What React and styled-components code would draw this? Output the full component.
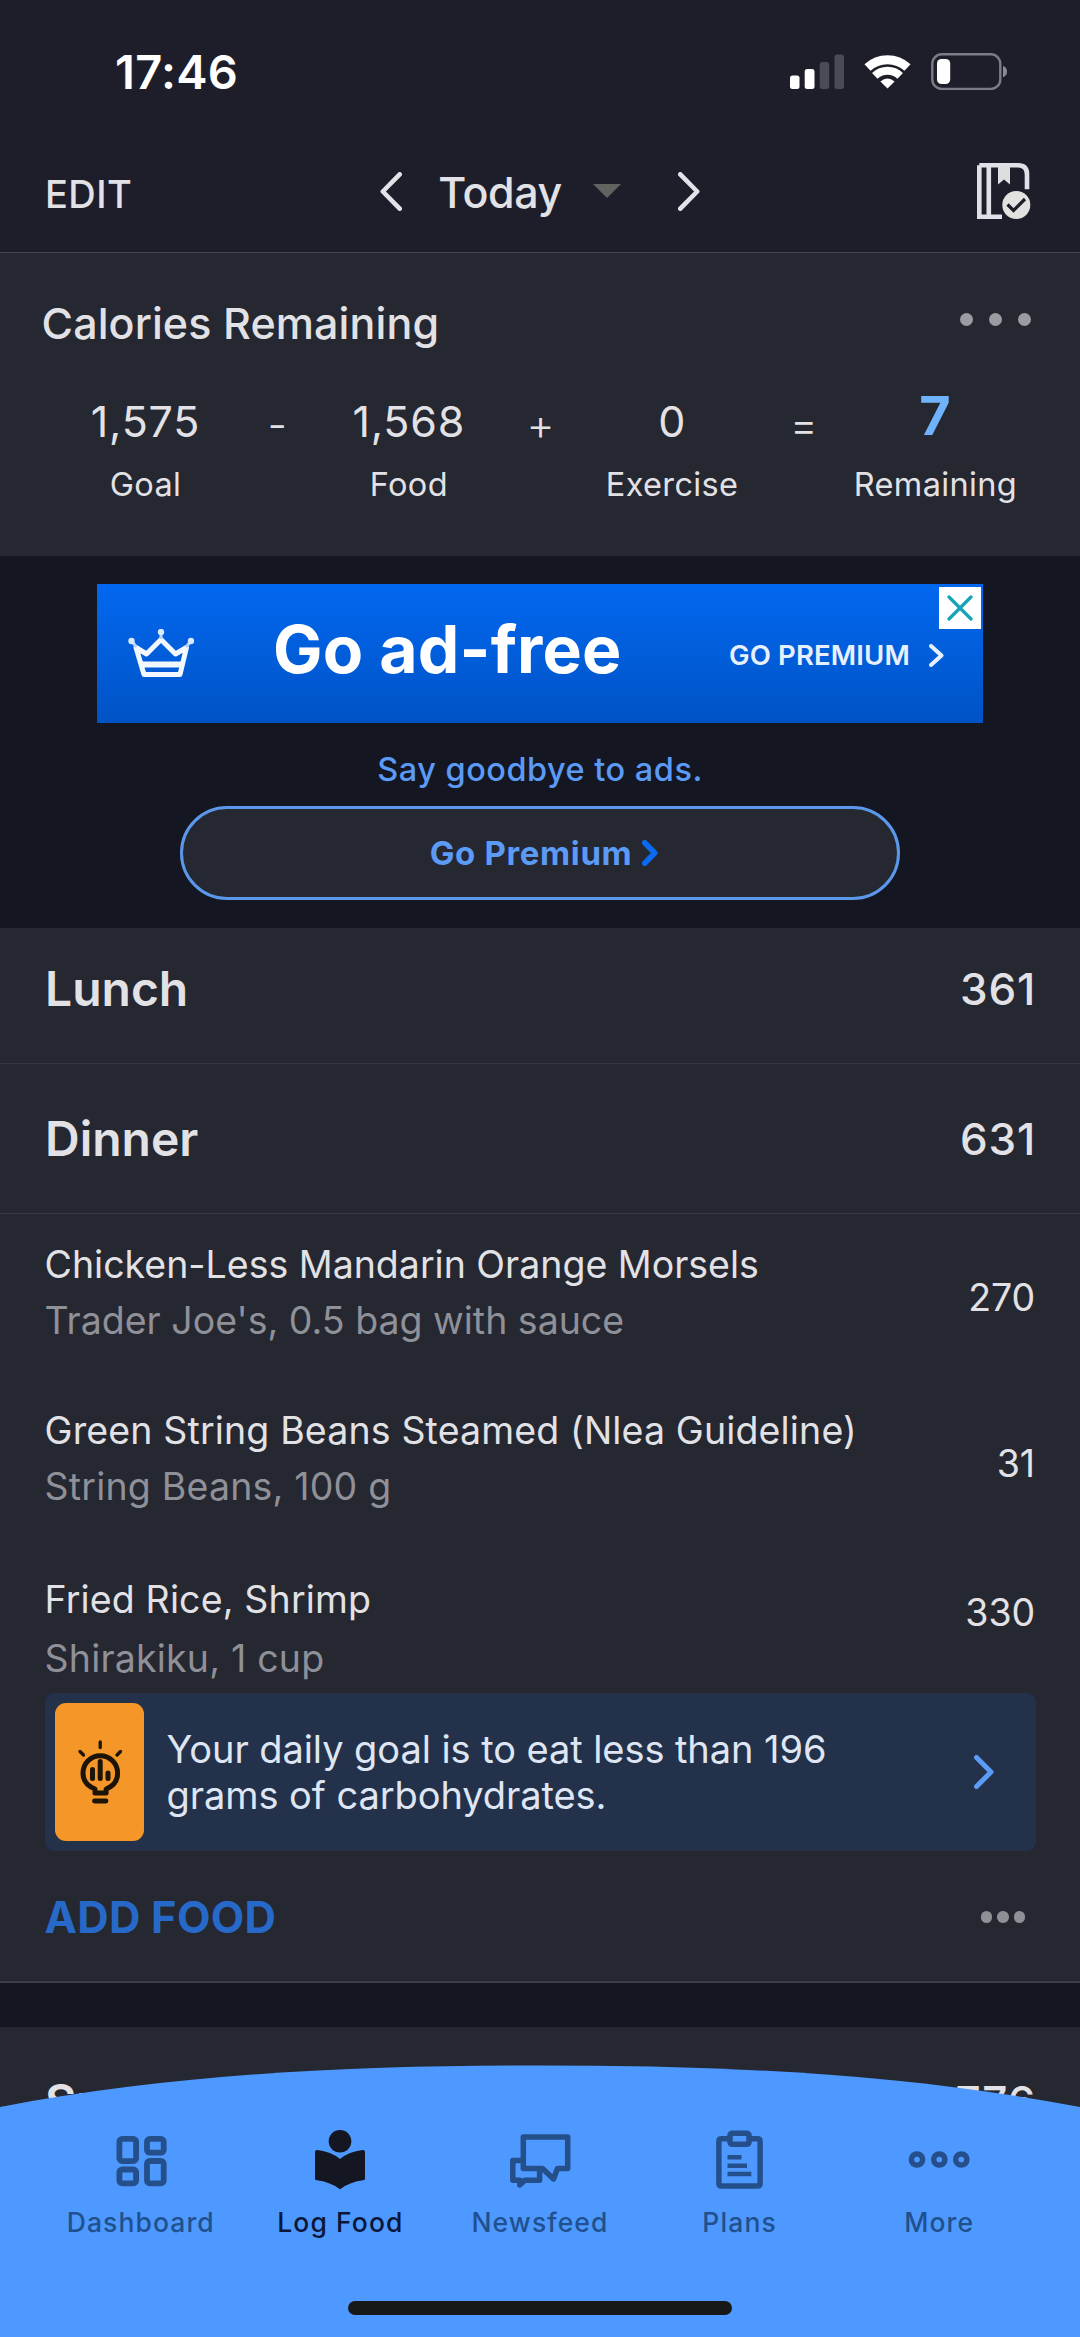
import styled, { createGlobalStyle, css } from "styled-components";

const GlobalStyle = createGlobalStyle`
  * {
    box-sizing: border-box;
  }
  body {
    margin: 0;
    background: #141622;
    color: #e2e2e6;
    font-family: "Inter", "Liberation Sans", sans-serif;
  }
  svg {
    display: block;
    flex: none;
  }
`;

const Screen = styled.div`
  position: relative;
  width: 1080px;
  height: 2337px;
  overflow: hidden;
`;

/* Status bar */
const StatusBar = styled.div`
  display: flex;
  align-items: center;
  justify-content: space-between;
  height: 144px;
  padding: 0 73px 0 115px;
  background: #1d1e29;
`;

const Clock = styled.div`
  padding-bottom: 1px;
  font-size: 47px;
  font-weight: 600;
  letter-spacing: 0.3px;
  color: #fff;
`;

const StatusIcons = styled.div`
  display: flex;
  align-items: center;
`;

/* Day picker header */
const Header = styled.header`
  display: grid;
  grid-template-columns: 1fr auto 1fr;
  align-items: center;
  height: 109px;
  padding: 0 49px 14px 45px;
  background: #1d1e29;
  border-bottom: 1px solid #42444d;
`;

const Edit = styled.div`
  padding-top: 6px;
  font-size: 38px;
  font-weight: 550;
  letter-spacing: 0.4px;
`;

const DayPicker = styled.div`
  display: flex;
  align-items: center;
  margin-left: 4px;
`;

const Day = styled.div`
  margin: 0 31px 0 36px;
  padding-top: 2px;
  font-size: 43px;
  font-weight: 450;
  letter-spacing: -0.4px;
`;

const HeaderAction = styled.div`
  justify-self: end;
`;

/* Calories summary */
const Summary = styled.section`
  height: 303px;
  background: #252731;
`;

const SummaryHead = styled.div`
  display: flex;
  align-items: center;
  justify-content: space-between;
  height: 140px;
  padding: 0 49px 0 41.5px;
`;

const SummaryTitle = styled.h2`
  margin: 0;
  font-size: 43px;
  font-weight: 450;
  letter-spacing: 0.1px;
`;

const Dots = styled.div`
  display: flex;
  gap: ${(p) => p.$gap}px;
  padding-bottom: ${(p) => p.$lift || 0}px;
  i {
    width: ${(p) => p.$size}px;
    height: ${(p) => p.$size}px;
    border-radius: 50%;
    background: ${(p) => p.$color};
  }
`;

const Equation = styled.div`
  display: grid;
  grid-template-columns: 180px 83.3px 180px 83.3px 180px 83.3px 180px;
  padding-left: 55.5px;
  text-align: center;
`;

const Operator = styled.div`
  line-height: 62px;
  font-size: 43px;
  font-weight: 350;
`;

const Value = styled.div`
  height: 58px;
  line-height: 57px;
  font-size: 43px;
  letter-spacing: 0.8px;
  ${(p) =>
    p.$highlight &&
    css`
      line-height: 45px;
      font-size: 54px;
      font-weight: 700;
      color: #70b3fd;
    `}
`;

const Caption = styled.div`
  line-height: 68px;
  font-size: 32.5px;
  letter-spacing: 0.35px;
`;

/* Ads */
const AdArea = styled.section`
  display: flex;
  flex-direction: column;
  align-items: center;
  height: 372px;
  padding-top: 28px;
  background: #141622;
`;

const Banner = styled.div`
  position: relative;
  display: flex;
  align-items: center;
  width: 886px;
  height: 139px;
  padding: 0 39px 0 31px;
  background: linear-gradient(#0268f0, #0053c5);
  color: #fff;
`;

const BannerTitle = styled.div`
  margin-left: 79px;
  padding-bottom: 10px;
  font-size: 66px;
  font-weight: 700;
  letter-spacing: 0.2px;
`;

const BannerLink = styled.div`
  display: flex;
  align-items: center;
  gap: 19px;
  margin-left: auto;
  padding-top: 3px;
  font-size: 27.5px;
  font-weight: 600;
  letter-spacing: 0.15px;
  color: #e6f0ff;
`;

const CloseBox = styled.div`
  position: absolute;
  top: 3px;
  right: 2px;
  display: flex;
  align-items: center;
  justify-content: center;
  width: 42px;
  height: 42px;
  background: #fff;
`;

const AdNote = styled.div`
  height: 83px;
  padding-top: 11px;
  line-height: 72px;
  font-size: 32.5px;
  font-weight: 450;
  letter-spacing: 0.5px;
  color: #5b9bf6;
`;

const PremiumButton = styled.button`
  display: flex;
  align-items: center;
  justify-content: center;
  gap: 10px;
  width: 720px;
  height: 94px;
  padding: 0 0 1px 8px;
  border: 3px solid #5b97ea;
  border-radius: 47px;
  background: #252731;
  font-family: inherit;
  font-size: 33px;
  font-weight: 700;
  letter-spacing: 0.65px;
  color: #5b9bf6;
`;

/* Diary */
const MealRow = styled.div`
  display: flex;
  align-items: center;
  justify-content: space-between;
  height: ${(p) => p.$height}px;
  padding: 0 45px;
  padding-bottom: ${(p) => p.$lift || 0}px;
  border-bottom: 1px solid #363843;
  background: #252731;
`;

const MealName = styled.h3`
  margin: 0;
  font-size: 48px;
  font-weight: 600;
`;

const MealTotal = styled.div`
  margin-right: -1px;
  font-size: 44px;
  font-weight: 500;
  letter-spacing: 0.8px;
`;

const Food = styled.div`
  display: flex;
  align-items: center;
  justify-content: space-between;
  height: ${(p) => (p.$last ? 147 : 166)}px;
  padding: 0 45px 0 44.5px;
  background: #252731;
`;

const FoodText = styled.div`
  align-self: flex-start;
  padding-top: ${(p) => (p.$last ? 25 : 23)}px;
  font-size: 37.5px;
  line-height: ${(p) => (p.$last ? 58.5 : 56)}px;
`;

const FoodName = styled.div`
  letter-spacing: ${(p) => p.$tracking}px;
`;

const FoodDetail = styled.div`
  letter-spacing: ${(p) => p.$tracking}px;
  color: #8f9098;
`;

const FoodCalories = styled.div`
  padding-bottom: ${(p) => (p.$last ? 14 : 0)}px;
  font-size: 37.5px;
  letter-spacing: -0.1px;
`;

const TipWrap = styled.div`
  padding: 0 44.5px;
  background: #252731;
`;

const Tip = styled.div`
  display: flex;
  align-items: center;
  height: 158px;
  padding: 0 42px 0 10.5px;
  border-radius: 9px;
  background: #24314a;
`;

const TipBadge = styled.div`
  display: flex;
  align-items: center;
  justify-content: center;
  width: 89px;
  height: 138px;
  border-radius: 11px;
  background: #f59628;
`;

const TipText = styled.p`
  flex: 1;
  margin: 0 0 0 22.5px;
  font-size: 38px;
  line-height: 46px;
  letter-spacing: -0.07px;
  white-space: nowrap;
  color: #dfe6f3;
`;

const AddRow = styled.div`
  display: flex;
  align-items: center;
  justify-content: space-between;
  height: 132px;
  padding: 2px 55px 0 44.5px;
  border-bottom: 2px solid #3b3d47;
  background: #252731;
`;

const AddFood = styled.div`
  font-size: 43.5px;
  font-weight: 700;
  letter-spacing: 0.25px;
  color: #2769c8;
`;

const Gap = styled.div`
  height: 44px;
`;

/* Tab bar, lies over the diary */
const TabBar = styled.nav`
  position: absolute;
  left: 0;
  bottom: 0;
  z-index: 1;
  width: 1080px;
  height: 272px;
  padding: 65px 41px 0;
`;

const Curve = styled.svg`
  position: absolute;
  left: 0;
  top: 0;
  z-index: -1;
`;

const Tabs = styled.div`
  display: grid;
  grid-template-columns: repeat(5, 1fr);
  justify-items: center;
`;

const Tab = styled.div`
  display: flex;
  flex-direction: column;
  align-items: center;
  color: ${(p) => (p.$active ? "#141622" : "#254f8b")};
`;

const TabLabel = styled.div`
  line-height: 64px;
  font-size: 26.5px;
  font-weight: ${(p) => (p.$active ? 500 : 450)};
  letter-spacing: 1.1px;
  color: ${(p) => (p.$active ? "#0b1638" : "#21508f")};
`;

const HomeIndicator = styled.div`
  width: 384px;
  height: 14px;
  margin: 47px auto 0;
  border-radius: 7px;
  background: #171918;
`;

const Chevron = ({ w, h, stroke, color, left }) => (
  <svg width={w} height={h} fill="none" stroke={color} strokeWidth={stroke} strokeLinecap="round" strokeLinejoin="round">
    <path
      d={
        left
          ? `M${w - stroke / 2} ${stroke / 2}L${stroke / 2 + 0.5} ${h / 2}L${w - stroke / 2} ${h - stroke / 2}`
          : `M${stroke / 2} ${stroke / 2}L${w - stroke / 2 - 0.5} ${h / 2}L${stroke / 2} ${h - stroke / 2}`
      }
    />
  </svg>
);

const ThreeDots = (props) => (
  <Dots {...props}>
    <i />
    <i />
    <i />
  </Dots>
);

const SignalIcon = () => (
  <svg width="217" height="38" viewBox="790 53 217 38">
    <g fill="#fff">
      <rect x="790" y="75.5" width="9.5" height="13.5" rx="2.5" />
      <rect x="804.7" y="69" width="9.8" height="20" rx="2.5" />
    </g>
    <g fill="#4a4b55">
      <rect x="819.7" y="62" width="9.5" height="27" rx="2.5" />
      <rect x="834.5" y="54.5" width="9.5" height="34.5" rx="2.5" />
    </g>
    {/* wifi */}
    <g fill="none" stroke="#fff">
      <path d="M867.5 67.5a29.5 29.5 0 0 1 40 0" strokeWidth="9" />
      <path d="M874.8 75.8a18.5 18.5 0 0 1 25.4 0" strokeWidth="8" />
    </g>
    <path d="M887.5 88.6L880.4 81.4Q887.5 75.4 894.6 81.4Z" fill="#fff" />
    {/* battery */}
    <rect x="932.3" y="54.3" width="68" height="34.6" rx="9.5" fill="none" stroke="#7b7c85" strokeWidth="2.4" />
    <rect x="937" y="59" width="13.2" height="25" rx="4.5" fill="#fff" />
    <path d="M1003 66q4 1.2 4 5.6t-4 5.6z" fill="#8a8b92" />
  </svg>
);

const DiaryIcon = () => (
  <svg width="54" height="58" viewBox="977 161 54 58">
    <path
      d="M979.3 164.3H1018q9 0 9 9v15M979.3 164.3V215.700H1002M988.8 164v52"
      fill="none"
      stroke="#dfe1e8"
      strokeWidth="4.6"
    />
    <path d="M998 165h12v18.500l-6-5-6 5z" fill="#dcdedf" />
    <circle cx="1016.300" cy="204" r="16.500" fill="#1d1e29" />
    <circle cx="1016.300" cy="204" r="14" fill="#e2e3e0" />
    <path d="M1007.500 203.500l6 6L1025 198" fill="none" stroke="#1d1e29" strokeWidth="3.200" />
  </svg>
);

const CrownIcon = () => (
  <svg width="66" height="50" viewBox="17.5 25 66 50" fill="none" stroke="#f3f8ff" strokeLinejoin="round">
    <path d="M25.500 43.500L36 50L50.500 35.500L65 50L76 43.500L69.500 70.500H33.500Z" strokeWidth="5" />
    <path d="M30.500 60.500H72.500" strokeWidth="6" />
    <path d="M50.500 28v7M21 37l5 6M80.500 37l-5 6" strokeWidth="3" stroke="#b9d4fb" />
    <g fill="#dbe9ff" stroke="none">
      <circle cx="50.500" cy="28" r="3.200" />
      <circle cx="21" cy="37" r="3.200" />
      <circle cx="80.500" cy="37" r="3.200" />
    </g>
  </svg>
);

const BulbIcon = () => (
  <svg width="46" height="66" viewBox="76.500 1740 46 66" fill="none" stroke="#1d1408" strokeLinecap="round">
    <path
      d="M94.500 1794v-4c-6.500-2.500-12-7.500-12-16a17.300 17.300 0 0 1 34.600 0c0 8.500-5 13.500-11.500 16v4z"
      strokeWidth="5"
      strokeLinejoin="round"
    />
    <path d="M94 1802H105.500" strokeWidth="4.800" />
    <path d="M92 1770.500v9M99.700 1762.500v17M107.500 1774v5.500" strokeWidth="5" />
    <path d="M99.700 1743v5.500M79.500 1752.500l3.500 3.500M120 1752.500l-3.500 3.500" strokeWidth="3.300" />
  </svg>
);

const TabIcon = ({ children }) => (
  <svg width="66" height="60" viewBox="0 0 66 60" fill="none" stroke="currentColor" strokeWidth="5.5">
    {children}
  </svg>
);

const tabs = [
  {
    label: "Dashboard",
    icon: (
      <g strokeWidth="5.8">
        <rect x="11.4" y="8.900" width="16.7" height="22.2" rx="2.8" />
        <rect x="11.4" y="39.500" width="16.7" height="13.8" rx="2.8" />
        <rect x="39" y="8.900" width="16.7" height="13.8" rx="2.8" />
        <rect x="39" y="31" width="16.7" height="22.3" rx="2.8" />
      </g>
    ),
  },
  {
    label: "Log Food",
    active: true,
    icon: (
      <g fill="currentColor" stroke="none">
        <circle cx="33" cy="11.300" r="11.300" />
        <path d="M33 29q9-7.500 22.500-9q2.500-.3 2.500 2v26.500q0 1.500-1.600 1.700q-13 1.300-23.400 9q-10.400-7.700-23.400-9q-1.600-.2-1.600-1.700V22q0-2.300 2.500-2q13.500 1.500 22.500 9z" />
      </g>
    ),
  },
  {
    label: "Newsfeed",
    icon: (
      <g strokeLinejoin="round">
        <path d="M16.300 7h44.400v31.500H50.500L46.500 49L35.500 38.500H16.300z" />
        <path d="M14.500 30.500H5.800v19.800h7v4.600l5-4.600h14.800V40.500" />
      </g>
    ),
  },
  {
    label: "Plans",
    icon: (
      <g strokeLinejoin="round">
        <rect x="23" y="3.300" width="19" height="11" rx="2" />
        <path d="M22 8.800h-7.500q-2.600 0-2.600 2.600v42q0 2.600 2.600 2.600h36q2.600 0 2.600-2.600v-42q0-2.600-2.600-2.600H43" />
        <path d="M20.500 27.200h14M20.500 35.800h19.500M20.500 44h23.800" strokeWidth="4.500" />
      </g>
    ),
  },
  {
    label: "More",
    icon: (
      <>
        <circle cx="11" cy="29.500" r="5.600" />
        <circle cx="33.300" cy="29.500" r="5.600" />
        <circle cx="55.300" cy="29.500" r="5.600" />
      </>
    ),
  },
];

const foods = [
  { name: "Chicken-Less Mandarin Orange Morsels", detail: "Trader Joe's, 0.5 bag with sauce", calories: 270, track: [0, 0] },
  { name: "Green String Beans Steamed (Nlea Guideline)", detail: "String Beans, 100 g", calories: 31, track: [0.15, 0.2] },
  { name: "Fried Rice, Shrimp", detail: "Shirakiku, 1 cup", calories: 330, track: [0.15, 0.2], last: true },
];

const totals = [
  ["1,575", "Goal", "-"],
  ["1,568", "Food", "+"],
  ["0", "Exercise", "="],
  ["7", "Remaining"],
];

const App = () => {
  return (
    <>
      <GlobalStyle />
      <Screen>
        <StatusBar>
          <Clock>17:46</Clock>
          <StatusIcons>
            <SignalIcon />
          </StatusIcons>
        </StatusBar>

        <Header>
          <Edit>EDIT</Edit>
          <DayPicker>
            <Chevron left w={22} h={39} stroke={4.6} color="#e2e3e8" />
            <Day>Today</Day>
            <svg width="28" height="14">
              <path d="M0 0h28L14 14z" fill="#606360" />
            </svg>
            <svg width="57" height="1" />
            <Chevron w={22} h={39} stroke={4.6} color="#e2e3e8" />
          </DayPicker>
          <HeaderAction>
            <DiaryIcon />
          </HeaderAction>
        </Header>

        <Summary>
          <SummaryHead>
            <SummaryTitle>Calories Remaining</SummaryTitle>
            <ThreeDots $size={13} $gap={16} $lift={7} $color="#9b9ca2" />
          </SummaryHead>
          <Equation>
            {totals.map(([value, label, op]) => [
              <div key={label}>
                <Value $highlight={label === "Remaining"}>{value}</Value>
                <Caption>{label}</Caption>
              </div>,
              op && <Operator key={op}>{op}</Operator>,
            ])}
          </Equation>
        </Summary>

        <AdArea>
          <Banner>
            <CrownIcon />
            <BannerTitle>Go ad-free</BannerTitle>
            <BannerLink>
              GO PREMIUM
              <Chevron w={15} h={23} stroke={4} color="#e6f0ff" />
            </BannerLink>
            <CloseBox>
              <svg width="26" height="26" stroke="#16a3b8" strokeWidth="3.2" strokeLinecap="round">
                <path d="M2 2l22 22M24 2L2 24" />
              </svg>
            </CloseBox>
          </Banner>
          <AdNote>Say goodbye to ads.</AdNote>
          <PremiumButton>
            Go Premium
            <Chevron w={16} h={26} stroke={5.5} color="#0a6af0" />
          </PremiumButton>
        </AdArea>

        <MealRow $height={136} $lift={14}>
          <MealName>Lunch</MealName>
          <MealTotal>361</MealTotal>
        </MealRow>
        <MealRow $height={150}>
          <MealName>Dinner</MealName>
          <MealTotal>631</MealTotal>
        </MealRow>

        {foods.map((food) => (
          <Food key={food.name} $last={food.last}>
            <FoodText $last={food.last}>
              <FoodName $tracking={food.track[0]}>{food.name}</FoodName>
              <FoodDetail $tracking={food.track[1]}>{food.detail}</FoodDetail>
            </FoodText>
            <FoodCalories $last={food.last}>{food.calories}</FoodCalories>
          </Food>
        ))}

        <TipWrap>
          <Tip>
            <TipBadge>
              <BulbIcon />
            </TipBadge>
            <TipText>
              Your daily goal is to eat less than 196
              <br />
              grams of carbohydrates.
            </TipText>
            <Chevron w={20} h={34} stroke={5} color="#5b9cf8" />
          </Tip>
        </TipWrap>
        <AddRow>
          <AddFood>ADD FOOD</AddFood>
          <ThreeDots $size={11.5} $gap={5} $color="#8f9096" />
        </AddRow>
        <Gap />
        <MealRow $height={150}>
          <MealName>Snacks</MealName>
          <MealTotal>776</MealTotal>
        </MealRow>

        <TabBar>
          <Curve width="1080" height="272">
            <path d="M0 42C180 7.7 360 .5 540 .5S900 7.7 1080 42V272H0Z" fill="#4e99ff" />
          </Curve>
          <Tabs>
            {tabs.map(({ label, icon, active }) => (
              <Tab key={label} $active={active}>
                <TabIcon>{icon}</TabIcon>
                <TabLabel $active={active}>{label}</TabLabel>
              </Tab>
            ))}
          </Tabs>
          <HomeIndicator />
        </TabBar>
      </Screen>
    </>
  );
};

export default App;
